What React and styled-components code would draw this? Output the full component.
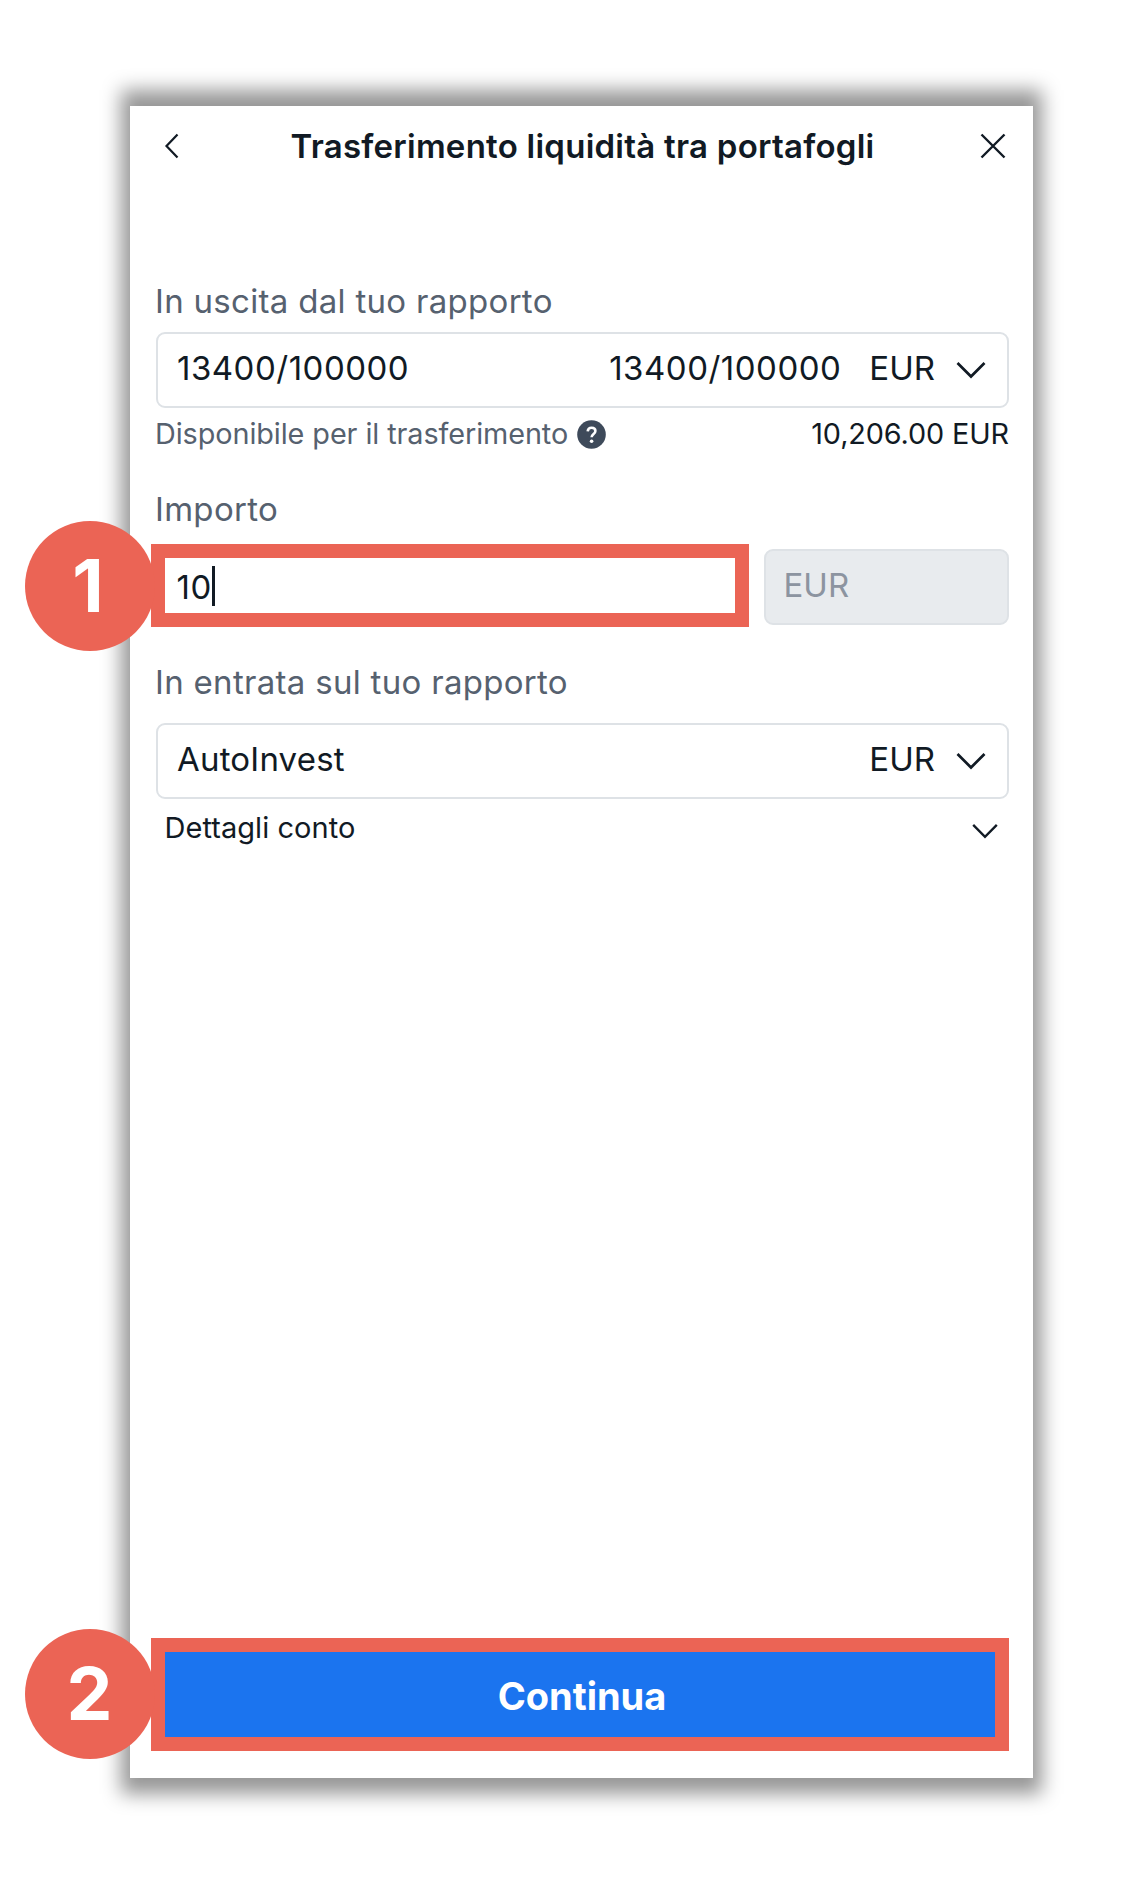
import React from "react";
import styled, { createGlobalStyle } from "styled-components";

const GlobalStyle = createGlobalStyle`
  * {
    box-sizing: border-box;
  }

  body {
    margin: 0;
    background: #ffffff;
    font-family: Inter, "Liberation Sans", sans-serif;
    color: #111a24;
  }
`;

const Page = styled.div`
  min-height: 1891px;
  padding: 106px 93px 0 130px;
`;

const Card = styled.main`
  position: relative;
  display: flex;
  flex-direction: column;
  height: 1672px;
  padding-bottom: 27px;
  background: #ffffff;

  &::before {
    content: "";
    position: absolute;
    z-index: -1;
    inset: -16px -9px;
    background: rgba(0, 0, 0, 0.41);
    filter: blur(9.5px);
  }
`;

const Header = styled.header`
  display: flex;
  align-items: center;
  justify-content: space-between;
  height: 80px;
  padding: 0 26px 0 33px;
`;

const Title = styled.h1`
  margin: 0;
  padding-left: 5px;
  font-size: 33px;
  font-weight: 600;
  line-height: 40px;
  letter-spacing: 0.25px;
  white-space: nowrap;
`;

const IconButton = styled.button`
  display: flex;
  padding: 0;
  border: 0;
  background: none;
  color: inherit;
`;

const Body = styled.section`
  flex: 1;
  padding: 95px 24px 0 25px;
`;

const Label = styled.label`
  display: block;
  margin-top: ${({ $top }) => $top || 0}px;
  font-size: 33px;
  line-height: 40px;
  letter-spacing: 0.3px;
  color: #56616f;
`;

const Select = styled.div`
  display: flex;
  align-items: center;
  height: 76px;
  margin: ${({ $top }) => $top}px 0 0 0.5px;
  padding: 0 20px 5px 19.5px;
  border: 2px solid #dee2e6;
  border-radius: 9px;
  font-size: 33px;
`;

const Account = styled.span`
  letter-spacing: ${({ $numeric }) => ($numeric ? 0.5 : 0.2)}px;
`;

const Side = styled.span`
  display: flex;
  align-items: center;
  margin-left: auto;
`;

const Currency = styled.span`
  margin: 0 20px 0 28px;
`;

const Helper = styled.div`
  display: flex;
  align-items: center;
  justify-content: space-between;
  height: 36px;
  margin-top: 8px;
  font-size: 28.8px;
  line-height: 36px;
`;

const Muted = styled.span`
  display: flex;
  align-items: center;
  gap: 9px;
  letter-spacing: -0.08px;
  color: #56616f;
`;

const Available = styled.span`
  letter-spacing: -0.12px;
`;

const HelpIcon = styled.svg`
  margin-top: 1px;
`;

const AmountRow = styled.div`
  display: flex;
  align-items: flex-start;
  gap: 15px;
  margin: 15px 0 0 -4px;
`;

const AmountField = styled.div`
  position: relative;
  display: flex;
  align-items: center;
  width: 598px;
  height: 83px;
  padding: 3px 0 0 11.5px;
  border: 14px solid #eb6455;
  font-size: 33px;
  letter-spacing: 0.5px;
`;

const Caret = styled.i`
  width: 3px;
  height: 40px;
  margin-top: -2px;
  background: #111a24;
`;

const Disabled = styled.div`
  display: flex;
  align-items: center;
  flex: 1;
  height: 76px;
  margin-top: 5px;
  padding: 0 0 4px 17.5px;
  border: 2px solid #dee2e6;
  border-radius: 9px;
  background: #e8ebee;
  font-size: 33px;
  color: #8c94a0;
`;

const Details = styled.div`
  display: flex;
  align-items: center;
  justify-content: space-between;
  height: 40px;
  margin-top: 8px;
  padding: 0 10px 0 9.5px;
  font-size: 29px;
  letter-spacing: 0.05px;
`;

const Submit = styled.button`
  position: relative;
  width: 858px;
  height: 113px;
  margin: 0 0 0 21px;
  padding: 2px 0 0 4px;
  border: 14px solid #eb6455;
  background: #1b74ef;
  font-family: inherit;
  font-size: 38px;
  font-weight: 700;
  color: #ffffff;
`;

const Step = styled.span`
  position: absolute;
  top: ${({ $top }) => $top}px;
  left: -140px;
  display: flex;
  align-items: center;
  justify-content: center;
  width: 130px;
  height: 130px;
  padding: 0 ${({ $shift }) => $shift}px 2px 0;
  border-radius: 50%;
  background: #eb6455;
  font-size: 73px;
  font-weight: 700;
  line-height: 1;
  letter-spacing: 0;
  color: #ffffff;
`;

const Chevron = ({ width = 32, top = 6 }) => (
  <svg width={width} height={width / 2 + 3} viewBox="0 0 32 19" fill="none" style={{ marginTop: top }}>
    <path d="M2.5 2L16 15.5L29.5 2" stroke="currentColor" strokeWidth="2.7" />
  </svg>
);

const App = () => (
  <>
    <GlobalStyle />
    <Page>
      <Card>
        <Header>
          <IconButton aria-label="Indietro">
            <svg width="18" height="28" viewBox="0 0 18 28" fill="none">
              <path d="M14.5 2.5L3.5 14L14.5 25.5" stroke="currentColor" strokeWidth="2.2" />
            </svg>
          </IconButton>
          <Title>Trasferimento liquidità tra portafogli</Title>
          <IconButton aria-label="Chiudi">
            <svg width="28" height="28" viewBox="0 0 28 28" fill="none">
              <path d="M2.5 2.5L25.5 25.5M25.5 2.5L2.5 25.5" stroke="currentColor" strokeWidth="2.4" />
            </svg>
          </IconButton>
        </Header>

        <Body>
          <Label>In uscita dal tuo rapporto</Label>
          <Select $top={11}>
            <Account $numeric>13400/100000</Account>
            <Side>
              <Account $numeric>13400/100000</Account>
              <Currency>EUR</Currency>
              <Chevron />
            </Side>
          </Select>
          <Helper>
            <Muted>
              Disponibile per il trasferimento
              <HelpIcon width="29" height="29" viewBox="0 0 29 29" fill="none">
                <circle cx="14.5" cy="14.5" r="14.3" fill="#3e4a5a" />
                <path
                  d="M10.7 11.3C10.9 8.9 12.4 7.7 14.6 7.7C16.9 7.7 18.4 9 18.4 11C18.4 14 14.6 13.9 14.6 17.3"
                  stroke="#ffffff"
                  strokeWidth="2.6"
                />
                <circle cx="14.6" cy="21.2" r="1.8" fill="#ffffff" />
              </HelpIcon>
            </Muted>
            <Available>10,206.00 EUR</Available>
          </Helper>

          <Label $top={37}>Importo</Label>
          <AmountRow>
            <AmountField>
              10
              <Caret />
              <Step $top={-37} $shift={4}>1</Step>
            </AmountField>
            <Disabled>EUR</Disabled>
          </AmountRow>

          <Label $top={35}>In entrata sul tuo rapporto</Label>
          <Select $top={21}>
            <Account>AutoInvest</Account>
            <Side>
              <Currency>EUR</Currency>
              <Chevron />
            </Side>
          </Select>
          <Details>
            Dettagli conto
            <Chevron width={28} top={8} />
          </Details>
        </Body>

        <Submit>
          Continua
          <Step $top={-23} $shift={1}>2</Step>
        </Submit>
      </Card>
    </Page>
  </>
);

export default App;
